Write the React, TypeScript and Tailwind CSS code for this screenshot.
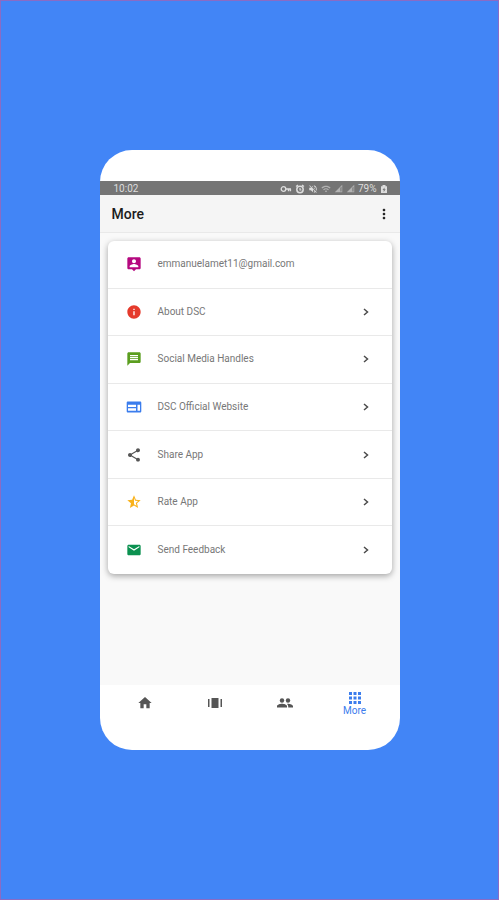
import React, { ReactNode } from "react";
import {
  MdHome,
  MdInfo,
  MdMarkunread,
  MdMessage,
  MdMoreVert,
  MdNetworkCell,
  MdShare,
  MdStarHalf,
  MdVolumeOff,
  MdWifi,
} from "react-icons/md";

const ContactIcon = () => (
  <svg viewBox="0 0 24 24" fill="currentColor" className="h-4 w-4">
    <path d="M20 2H4c-1 0-2 1-2 2v14c0 1 1 2 2 2h5l3 3 3-3h5c1 0 2-1 2-2V4c0-1-1-2-2-2zm-8 3c1.700 0 3 1.300 3 3s-1.300 3-3 3-3-1.300-3-3 1.300-3 3-3zm6.500 12h-13v-1.500c0-2 4.300-3.500 6.500-3.500s6.500 1.500 6.500 3.500z" />
  </svg>
);

const WebIcon = () => (
  <svg viewBox="0 0 16 16" fill="currentColor" className="h-4 w-4">
    <path
      fillRule="evenodd"
      d="M2 2.500h12c.8 0 1.300.5 1.300 1.300v8.400c0 .8-.5 1.300-1.300 1.300H2c-.8 0-1.300-.5-1.300-1.300V3.800c0-.8.500-1.300 1.300-1.300zM2 5.700v2.200h8V5.700zm0 3.500v2.600h8V9.200zm9.500-3.500v6.100H14V5.700z"
    />
  </svg>
);

const CarouselIcon = () => (
  <svg viewBox="0 0 16 16" fill="currentColor" className="h-4 w-4">
    <path d="M4.500 3h7v10h-7zM1 4h1.500v8H1zM13.500 4H15v8h-1.500z" />
  </svg>
);

const PeopleIcon = () => (
  <svg viewBox="0 0 18 16" fill="currentColor" className="h-4 w-[18px]">
    <circle cx="6" cy="5.500" r="2.200" />
    <circle cx="12" cy="5.500" r="2.200" />
    <path d="M1 12.500v-1.300C1 9.700 4 8.800 6 8.800s5 .9 5 2.400v1.300zM12.200 12.500v-1.300c0-.9-.5-1.700-1.200-2.300 2.300-.4 6 .6 6 2.300v1.300z" />
  </svg>
);

const AppsIcon = () => (
  <svg viewBox="0 0 16 16" fill="currentColor" className="h-4 w-4">
    <path d="M2 2h3v3H2zM6.500 2h3v3h-3zM11 2h3v3h-3zM2 6.500h3v3H2zM6.500 6.500h3v3h-3zM11 6.500h3v3h-3zM2 11h3v3H2zM6.500 11h3v3h-3zM11 11h3v3h-3z" />
  </svg>
);

const ChevronIcon = () => (
  <svg
    viewBox="0 0 8 10"
    fill="none"
    stroke="#4b4b4b"
    strokeWidth="1.5"
    className="h-[10px] w-2"
  >
    <path d="M2 2 5.500 5 2 8" />
  </svg>
);

const KeyIcon = () => (
  <svg viewBox="0 0 12 8" fill="none" stroke="currentColor" className="h-2 w-3">
    <circle cx="3.500" cy="4" r="2.300" strokeWidth="1.3" />
    <path d="M5.500 4H11M8.500 4v2.200M10.400 4v2.200" strokeWidth="1.4" />
  </svg>
);

const AlarmIcon = () => (
  <svg viewBox="0 0 10 10" fill="none" stroke="currentColor" className="h-[10px] w-[10px]">
    <circle cx="5" cy="5.500" r="3.200" strokeWidth="1.5" />
    <path d="M1 2.500 3 1M9 2.500 7 1M5 4v2h1.500" strokeWidth="1.2" />
  </svg>
);

const BatteryIcon = () => (
  <svg viewBox="0 0 8 10" fill="currentColor" className="h-[10px] w-2">
    <path
      fillRule="evenodd"
      d="M2.500 1h3v1.300H7V9H1V2.300h1.500zM4.500 3.500 2.500 6h1.200v2l2-2.700H4.500z"
    />
  </svg>
);

const StatusBar = () => {
  return (
    <div className="flex h-[14px] items-center justify-between bg-[#757575] pl-[14px] pr-3 pt-px text-[10px] leading-none text-[#dddddd]">
      <span>10:02</span>
      <div className="flex items-center gap-[3px]">
        <KeyIcon />
        <AlarmIcon />
        <MdVolumeOff size={10} />
        <MdWifi size={10} className="opacity-60" />
        <MdNetworkCell size={9} className="opacity-60" />
        <MdNetworkCell size={9} className="opacity-60" />
        <span>79%</span>
        <BatteryIcon />
      </div>
    </div>
  );
};

type MenuRowProps = {
  item: {
    title: string;
    icon: ReactNode;
    color: string;
    plain?: boolean;
  };
};
const MenuRow = ({ item }: MenuRowProps) => {
  const content = (
    <>
      <span className={item.color}>{item.icon}</span>
      <span className="flex-1">{item.title}</span>
      {!item.plain && <ChevronIcon />}
    </>
  );

  return (
    <li className="flex">
      {item.plain ? (
        <div className="flex flex-1 items-center gap-4 px-[18px]">{content}</div>
      ) : (
        <a href="#" className="flex flex-1 items-center gap-4 pl-[18px] pr-[22px]">
          {content}
        </a>
      )}
    </li>
  );
};

const App = () => {
  const items = [
    {
      title: "emmanuelamet11@gmail.com",
      icon: <ContactIcon />,
      color: "text-[#b5087f]",
      plain: true,
    },
    { title: "About DSC", icon: <MdInfo size={16} />, color: "text-[#e53a2c]" },
    { title: "Social Media Handles", icon: <MdMessage size={16} />, color: "text-[#5b9e1f]" },
    { title: "DSC Official Website", icon: <WebIcon />, color: "text-[#3b7ded]" },
    { title: "Share App", icon: <MdShare size={16} />, color: "text-[#555555]" },
    { title: "Rate App", icon: <MdStarHalf size={16} />, color: "text-[#f9b21b]" },
    { title: "Send Feedback", icon: <MdMarkunread size={16} />, color: "text-[#0b9150]" },
  ];

  const tabs = [
    { title: "Home", icon: <MdHome size={16} /> },
    { title: "Events", icon: <CarouselIcon /> },
    { title: "Team", icon: <PeopleIcon /> },
    { title: "More", icon: <AppsIcon />, active: true },
  ];

  return (
    <div className="flex min-h-screen items-center justify-center border border-[#8a6bc4] bg-[#4285f6] font-['Roboto','Liberation_Sans',sans-serif]">
      <div className="flex min-h-[600px] w-[300px] max-w-full flex-col overflow-hidden rounded-[32px] bg-white pt-[31px]">
        <StatusBar />
        <header className="flex h-[38px] items-center justify-between border-b border-[#e9e9e9] bg-[#f5f5f5] pl-3 pr-2">
          <h1 className="text-[14px] font-medium leading-4 text-[#1c1c1c]">More</h1>
          <button aria-label="Menu" className="text-[#222222]">
            <MdMoreVert size={16} />
          </button>
        </header>
        <main className="flex-1 bg-[#f9f9f9] px-2 pb-6 pt-2">
          <ul className="grid h-[333px] auto-rows-fr divide-y divide-[#e9e9e9] rounded-md bg-white text-[10px] leading-3 text-[#777777] shadow-[0_2px_6px_rgba(0,0,0,0.35)]">
            {items.map((item, i) => (
              <MenuRow key={i} item={item} />
            ))}
          </ul>
        </main>
        <nav className="grid h-[65px] grid-cols-4 px-[10px] pt-1">
          {tabs.map((tab, i) => (
            <a
              key={i}
              href="#"
              aria-label={tab.title}
              className={
                tab.active
                  ? "flex h-7 flex-col items-center justify-center text-[#3b7ded]"
                  : "flex h-7 flex-col items-center justify-center text-[#555555]"
              }
            >
              {tab.icon}
              {tab.active && <span className="text-[10px] leading-[10px]">{tab.title}</span>}
            </a>
          ))}
        </nav>
      </div>
    </div>
  );
};

export default App;
